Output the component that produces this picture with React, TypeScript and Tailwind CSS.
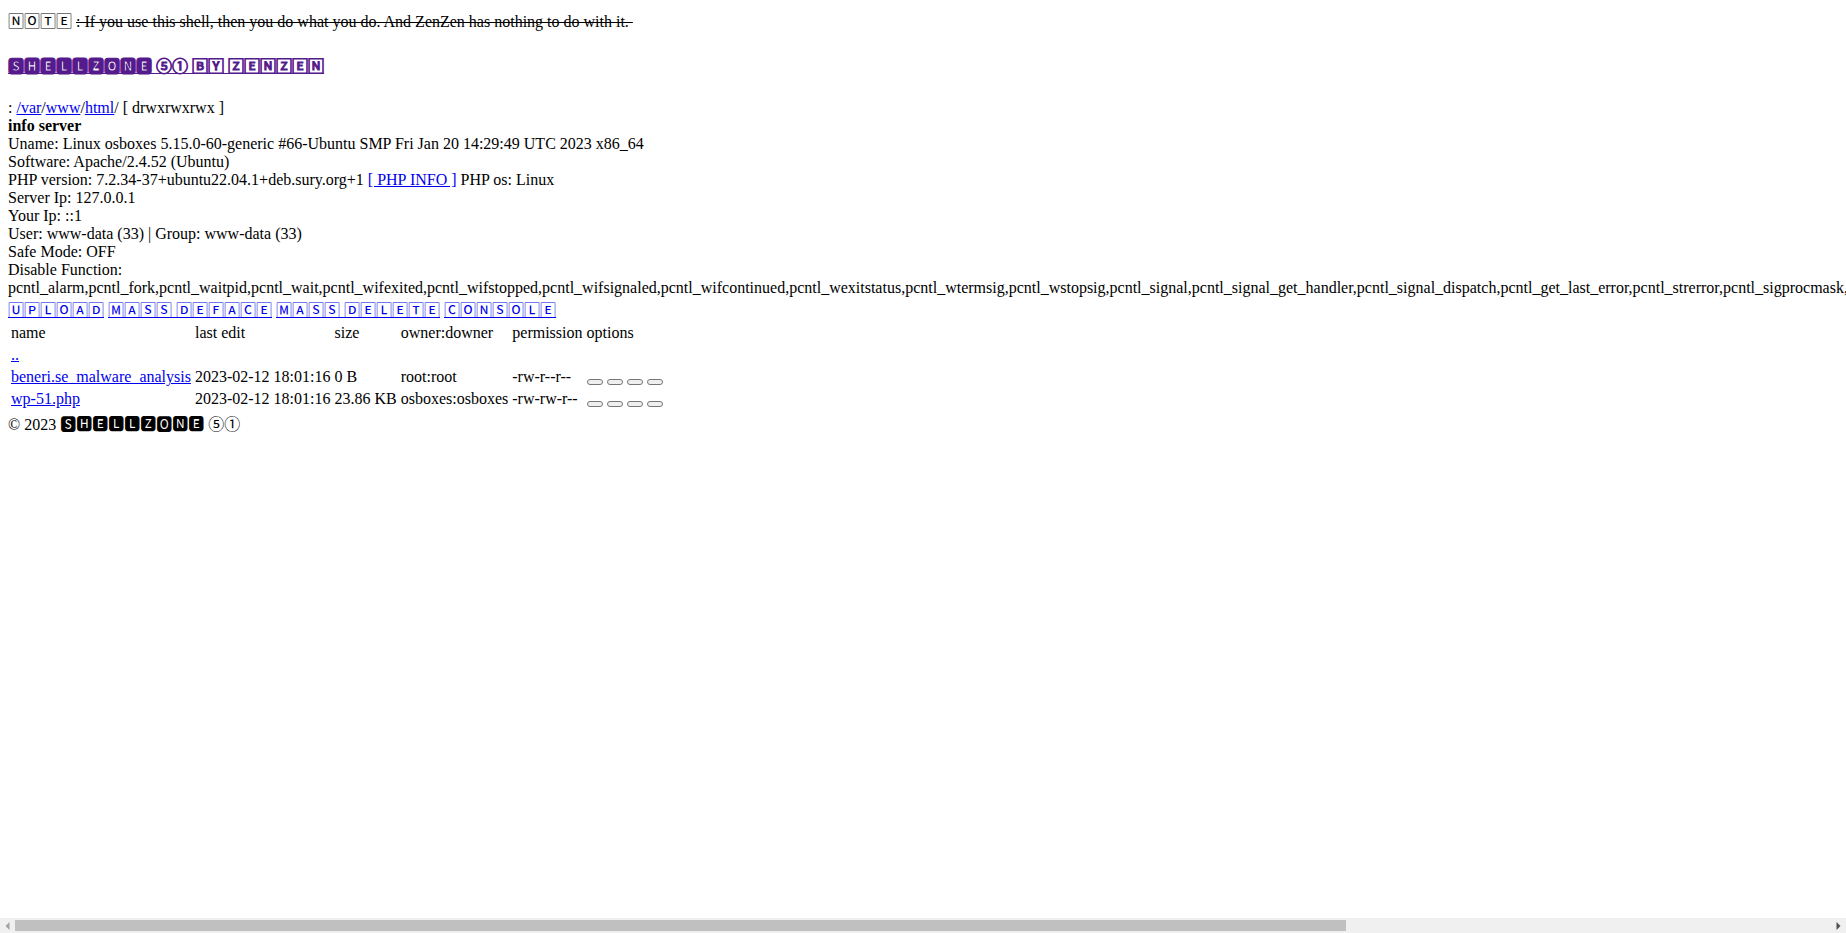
import React from 'react';

interface FileEntry {
  name: string;
  lastEdit: string;
  size: string;
  owner: string;
  permission: string;
}

const serverInfo = [
  { label: 'Server Ip', value: '127.0.0.1' },
  { label: 'Your Ip', value: '::1' },
  { label: 'User', value: 'www-data (33) | Group: www-data (33)' },
  { label: 'Safe Mode', value: 'OFF' }
];

const disabledFunctions = [
  'alarm', 'fork', 'waitpid', 'wait', 'wifexited', 'wifstopped', 'wifsignaled', 'wifcontinued',
  'wexitstatus', 'wtermsig', 'wstopsig', 'signal', 'signal_get_handler', 'signal_dispatch',
  'get_last_error', 'strerror', 'sigprocmask'
];

const menuItems = ['🅄🄿🄻🄾🄰🄳', '🄼🄰🅂🅂 🄳🄴🄵🄰🄲🄴', '🄼🄰🅂🅂 🄳🄴🄻🄴🅃🄴', '🄲🄾🄽🅂🄾🄻🄴'];

const columns = ['name', 'last edit', 'size', 'owner:downer', 'permission', 'options'];

const files: FileEntry[] = [
  {
    name: 'beneri.se_malware_analysis',
    lastEdit: '2023-02-12 18:01:16',
    size: '0 B',
    owner: 'root:root',
    permission: '-rw-r--r--'
  },
  {
    name: 'wp-51.php',
    lastEdit: '2023-02-12 18:01:16',
    size: '23.86 KB',
    owner: 'osboxes:osboxes',
    permission: '-rw-rw-r--'
  }
];

const actions = ['edit', 'rename', 'delete', 'download'];

const Link = ({ children }: { children: React.ReactNode }) => (
  <a href="#" className="text-[#0000ee] underline">{children}</a>
);

const FileTable = () => (
  <table className="border-separate border-spacing-[2px]">
    <thead>
      <tr>
        {columns.map((column) => (
          <th key={column} className="p-px text-left font-normal">{column}</th>
        ))}
      </tr>
    </thead>
    <tbody>
      <tr>
        <td className="p-px"><Link>..</Link></td>
      </tr>
      {files.map((file) => (
        <tr key={file.name}>
          <td className="p-px"><Link>{file.name}</Link></td>
          <td className="p-px">{file.lastEdit}</td>
          <td className="p-px">{file.size}</td>
          <td className="p-px">{file.owner}</td>
          <td className="p-px">{file.permission}</td>
          <td className="p-px">
            {actions.map((action) => (
              <React.Fragment key={action}>
                <button
                  aria-label={`${action} ${file.name}`}
                  className="rounded-[3px] border border-[#767676] bg-[#efefef] px-[7px] py-[2px]"
                />{' '}
              </React.Fragment>
            ))}
          </td>
        </tr>
      ))}
    </tbody>
  </table>
);

const ScrollBar = () => (
  <div className="flex h-[15px] shrink-0 items-center bg-[#f0f0f0]">
    <div className="flex w-[15px] justify-center">
      <svg width="5" height="8" viewBox="0 0 5 8" fill="#a3a3a3">
        <path d="M4.5 0v8L0.5 4z" />
      </svg>
    </div>
    <div className="flex-1">
      <div className="h-[11px] w-[73.3%] bg-[#c0c0c0]" />
    </div>
    <div className="flex w-[15px] justify-center">
      <svg width="5" height="8" viewBox="0 0 5 8" fill="#505050">
        <path d="M0.5 0v8L4.5 4z" />
      </svg>
    </div>
  </div>
);

export default function App() {
  return (
    <div className="flex h-screen flex-col bg-white font-['Liberation_Serif','Noto_Sans_CJK_JP',serif] text-base leading-[normal] text-black">
      <main className="flex-1 overflow-hidden p-2">
        <div>
          🄽🄾🅃🄴 <s>: If you use this shell, then you do what you do. And ZenZen has nothing to do with it.&nbsp;</s>
        </div>

        <h1 className="mt-[21px] mb-[22px]">
          <a href="#" className="text-[#551a8b] underline [-webkit-text-stroke:1px_#551a8b]">
            <b className="font-bold">🆂🅷🅴🅻🅻🆉🅾🅽🅴</b> ⑤① 🄱🅈 🅉🄴🄽🅉🄴🄽
          </a>
        </h1>

        {/* current path */}
        <div>
          : <Link>/var</Link>/<Link>www</Link>/<Link>html</Link>/ [ drwxrwxrwx ]
        </div>

        <h2 className="font-bold">info server</h2>
        <div>Uname: Linux osboxes 5.15.0-60-generic #66-Ubuntu SMP Fri Jan 20 14:29:49 UTC 2023 x86_64</div>
        <div>Software: Apache/2.4.52 (Ubuntu)</div>
        <div>
          PHP version: 7.2.34-37+ubuntu22.04.1+deb.sury.org+1 <Link>[ PHP INFO ]</Link> PHP os: Linux
        </div>
        {serverInfo.map((info) => (
          <div key={info.label}>{info.label}: {info.value}</div>
        ))}
        <div>Disable Function:</div>
        <div className="whitespace-nowrap">{disabledFunctions.map((fn) => `pcntl_${fn},`).join('')}</div>

        <nav>
          {menuItems.map((item) => (
            <React.Fragment key={item}>
              <Link>{item}</Link>{' '}
            </React.Fragment>
          ))}
        </nav>

        <FileTable />

        <footer>© 2023 🆂🅷🅴🅻🅻🆉🅾🅽🅴 ⑤①</footer>
      </main>
      <ScrollBar />
    </div>
  );
}
